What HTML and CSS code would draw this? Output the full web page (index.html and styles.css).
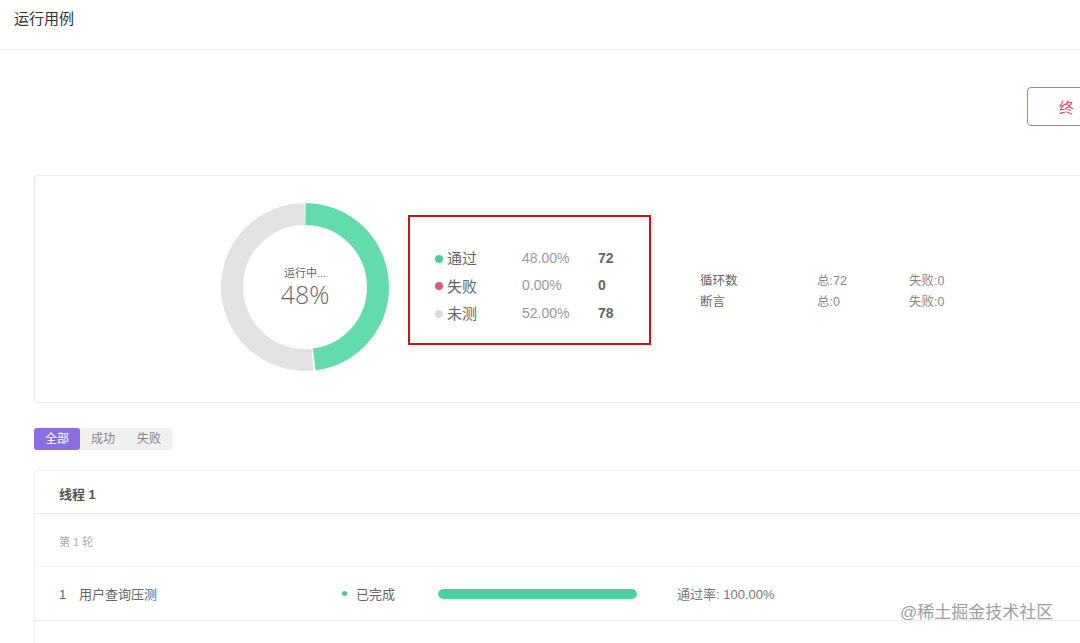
FILE: index.html
```html
<!DOCTYPE html>
<html lang="zh">
<head>
<meta charset="utf-8">
<title>运行用例</title>
<link rel="stylesheet" href="styles.css">
</head>
<body>
<header class="page-header">运行用例</header>
<main class="wrap">
  <div class="toolbar">
    <button class="btn-stop">终止</button>
  </div>

  <section class="stats-card">
    <div class="donut">
      <svg width="168" height="168" viewBox="0 0 168 168">
        <g transform="rotate(-90 84 84)">
          <circle cx="84" cy="84" r="73" fill="none" stroke="#e3e3e3" stroke-width="22"
            stroke-dasharray="236.5 458.67" stroke-dashoffset="-221.16"></circle>
          <circle cx="84" cy="84" r="73" fill="none" stroke="#62dcad" stroke-width="22"
            stroke-dasharray="219.16 458.67" stroke-dashoffset="-0.5"></circle>
        </g>
      </svg>
      <div class="donut-label">
        <div class="donut-status">运行中...</div>
        <div class="donut-pct">48%</div>
      </div>
    </div>

    <div class="legend">
      <div class="legend-row">
        <span class="legend-name"><i class="dot dot-pass"></i>通过</span>
        <span class="legend-pct">48.00%</span>
        <span class="legend-num">72</span>
      </div>
      <div class="legend-row">
        <span class="legend-name"><i class="dot dot-fail"></i>失败</span>
        <span class="legend-pct">0.00%</span>
        <span class="legend-num">0</span>
      </div>
      <div class="legend-row">
        <span class="legend-name"><i class="dot dot-none"></i>未测</span>
        <span class="legend-pct">52.00%</span>
        <span class="legend-num">78</span>
      </div>
    </div>

    <div class="summary">
      <div class="summary-row"><span class="s-name">循环数</span><span class="s-total">总:72</span><span>失败:0</span></div>
      <div class="summary-row"><span class="s-name">断言</span><span class="s-total">总:0</span><span>失败:0</span></div>
    </div>
  </section>

  <nav class="tabs">
    <span class="tab active">全部</span>
    <span class="tab">成功</span>
    <span class="tab">失败</span>
  </nav>

  <section class="thread-card">
    <div class="thread-title">线程 1</div>
    <div class="round">第 1 轮</div>
    <div class="case-row">
      <span class="case-name"><span class="case-idx">1</span>用户查询压测</span>
      <span class="case-status"><i class="sdot"></i>已完成</span>
      <span class="bar"><span class="bar-fill" style="width:100%"></span></span>
      <span class="case-rate">通过率: 100.00%</span>
    </div>
    <div class="case-row"></div>
  </section>
</main>
<div class="watermark">@稀土掘金技术社区</div>
</body>
</html>
```

FILE: styles.css
```css
html, body {
  margin: 0;
  padding: 0;
  width: 1080px;
  height: 643px;
  overflow: hidden;
  background: #fff;
  font-family: "Liberation Sans", "Noto Sans CJK SC", sans-serif;
  color: #666;
}

.page-header {
  height: 50px;
  box-sizing: border-box;
  padding: 9px 0 0 14px;
  font-size: 15px;
  line-height: 20px;
  color: #333;
  border-bottom: 1px solid #ececec;
}

.wrap {
  width: 1150px;
  box-sizing: border-box;
  padding: 0 34px;
}

.toolbar {
  display: flex;
  justify-content: flex-end;
  padding-top: 37px;
  margin-bottom: 49px;
}

.btn-stop {
  width: 89px;
  height: 39px;
  border: 1px solid #c77a86;
  border-radius: 4px;
  background: #fff;
  color: #d8506c;
  font-family: inherit;
  font-size: 15px;
  text-align: left;
  padding: 0 0 0 31px;
  letter-spacing: 10px;
  white-space: nowrap;
}

.stats-card {
  display: flex;
  align-items: flex-start;
  height: 228px;
  box-sizing: border-box;
  border: 1px solid #ebebeb;
  border-radius: 3px;
  padding-left: 186px;
  box-shadow: 0 1px 2px rgba(0,0,0,0.03);
}

.donut {
  position: relative;
  width: 168px;
  height: 168px;
  margin-top: 27px;
}

.donut svg { display: block; }

.donut-label {
  position: absolute;
  inset: 0;
  display: flex;
  flex-direction: column;
  align-items: center;
  justify-content: center;
}

.donut-status {
  font-size: 11px;
  line-height: 14px;
  color: #666;
}

.donut-pct {
  font-size: 25px;
  line-height: 29px;
  color: #666;
  font-family: "Open Sans", "Liberation Sans", sans-serif;
  font-weight: 300;
}

.legend {
  width: 243px;
  height: 130px;
  box-sizing: border-box;
  margin-left: 19px;
  margin-top: 39px;
  border: 2px solid #c4161c;
  padding: 27px 0 0 25px;
}

.legend-row {
  display: flex;
  align-items: center;
  height: 27.5px;
  font-size: 14px;
}

.legend-name {
  display: flex;
  align-items: center;
  width: 87px;
  font-size: 15px;
  color: #666;
}

.dot {
  display: inline-block;
  width: 8px;
  height: 8px;
  border-radius: 50%;
  margin-right: 4px;
  margin-top: 2px;
}
.dot-pass { background: #4fcf9b; }
.dot-fail { background: #dd5a84; }
.dot-none { background: #dadada; }

.legend-pct {
  width: 76px;
  color: #999;
}

.legend-num {
  font-weight: bold;
  color: #666;
}

.summary {
  margin-left: 49px;
  margin-top: 93px;
  font-size: 12.5px;
  color: #666;
}

.summary-row {
  display: flex;
  height: 21px;
  align-items: center;
}

.s-name { width: 117px; }
.s-total { width: 92px; color: #888; }
.summary-row span:last-child { color: #888; }

.tabs {
  display: inline-flex;
  margin-top: 25px;
  background: #f0f0f0;
  border-radius: 3px;
  height: 22px;
}

.tab {
  width: 46px;
  line-height: 22px;
  text-align: center;
  font-size: 12px;
  color: #888;
  border-radius: 3px;
}

.tab.active {
  background: #8c6ee3;
  color: #fff;
}

.thread-card {
  margin-top: 20px;
  border: 1px solid #ededed;
  border-radius: 3px;
  height: 200px;
}

.thread-title {
  height: 43px;
  box-sizing: border-box;
  padding: 13px 0 0 24px;
  font-size: 13px;
  font-weight: bold;
  color: #555;
  border-bottom: 1px solid #ebebeb;
}

.round {
  height: 53px;
  box-sizing: border-box;
  padding: 19px 0 0 24px;
  font-size: 11px;
  color: #aaa;
  border-bottom: 1px solid #f3f3f3;
}

.case-row {
  display: flex;
  align-items: center;
  height: 53px;
  padding-left: 24px;
  font-size: 13px;
  color: #666;
  border-bottom: 1px solid #ebebeb;
}

.case-name { width: 283px; }
.case-idx { display: inline-block; width: 20px; }

.case-status {
  display: flex;
  align-items: center;
  width: 96px;
}

.sdot {
  display: inline-block;
  width: 5px;
  height: 5px;
  border-radius: 50%;
  background: #4cc896;
  margin-right: 9px;
}

.bar {
  display: block;
  width: 199px;
  height: 10px;
  border-radius: 5px;
  background: #eee;
  overflow: hidden;
  margin-right: 40px;
}

.bar-fill {
  display: block;
  height: 100%;
  background: #48d3a0;
  border-radius: 5px;
}

.case-rate { color: #777; }

.watermark {
  position: absolute;
  left: 900px;
  top: 601px;
  font-size: 17px;
  line-height: 24px;
  color: #9e9e9e;
  text-shadow: 0 0 2px #fff;
}
```
